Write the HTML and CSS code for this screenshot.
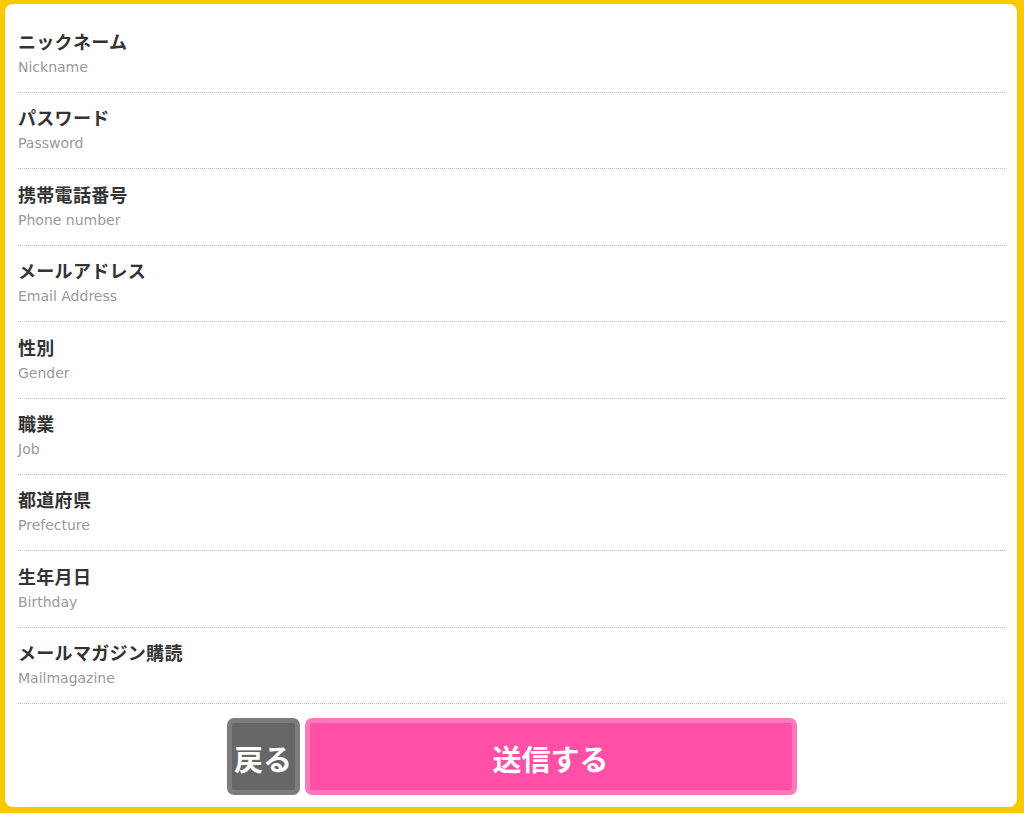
FILE: index.html
```html
<!DOCTYPE html>
<html lang="ja">
<head>
  <meta charset="UTF-8" />
  <meta name="viewport" content="width=device-width, initial-scale=1.0"/>
  <title>会員登録 確認</title>
  <link rel="stylesheet" href="styles.css">
</head>
<body>
  <div class="panel">
    <dl class="fields">
      <div class="field">
        <dt>ニックネーム</dt>
        <dd>Nickname</dd>
      </div>
      <div class="field">
        <dt>パスワード</dt>
        <dd>Password</dd>
      </div>
      <div class="field">
        <dt>携帯電話番号</dt>
        <dd>Phone number</dd>
      </div>
      <div class="field">
        <dt>メールアドレス</dt>
        <dd>Email Address</dd>
      </div>
      <div class="field">
        <dt>性別</dt>
        <dd>Gender</dd>
      </div>
      <div class="field">
        <dt>職業</dt>
        <dd>Job</dd>
      </div>
      <div class="field">
        <dt>都道府県</dt>
        <dd>Prefecture</dd>
      </div>
      <div class="field">
        <dt>生年月日</dt>
        <dd>Birthday</dd>
      </div>
      <div class="field">
        <dt>メールマガジン購読</dt>
        <dd>Mailmagazine</dd>
      </div>
    </dl>

    <div class="actions">
      <button class="btn btn-back">戻る</button>
      <button class="btn btn-submit">送信する</button>
    </div>
  </div>
</body>
</html>
```

FILE: styles.css
```css
html, body {
  height: 100%;
}

body {
  margin: 0;
  padding: 4px 7px 6px 5px;
  box-sizing: border-box;
  background-color: #f9c900;
  font-family: "Noto Sans CJK JP", "DejaVu Sans", sans-serif;
}

.panel {
  background: #fff;
  border-radius: 8px;
  height: 100%;
  box-sizing: border-box;
  padding: 12.6px 12px 0 13px;
}

.fields {
  margin: 0;
}

.field {
  padding: 13.4px 0 15px;
  border-bottom: 1px dotted #bdbdbd;
}

.field dt {
  font-size: 18px;
  font-weight: bold;
  line-height: 22px;
  letter-spacing: 0.3px;
  color: #333;
}

.field dd {
  margin: 5px 0 0;
  font-family: "DejaVu Sans", "Noto Sans CJK JP", sans-serif;
  font-size: 14px;
  line-height: 20px;
  color: #999;
}

.actions {
  display: flex;
  justify-content: center;
  gap: 5px;
  margin-top: 14px;
}

.btn {
  font-family: "Noto Sans CJK JP", sans-serif;
  font-size: 29px;
  font-weight: bold;
  color: #fff;
  height: 77px;
  border-radius: 7px;
  border: 5px solid;
  padding: 3px 0 0;
  cursor: pointer;
}

.btn-back {
  width: 73px;
  background-color: #666;
  border-color: #7c7c7c;
}

.btn-submit {
  width: 492px;
  background-color: #ff4fa6;
  border-color: #ff78b9;
}
```
